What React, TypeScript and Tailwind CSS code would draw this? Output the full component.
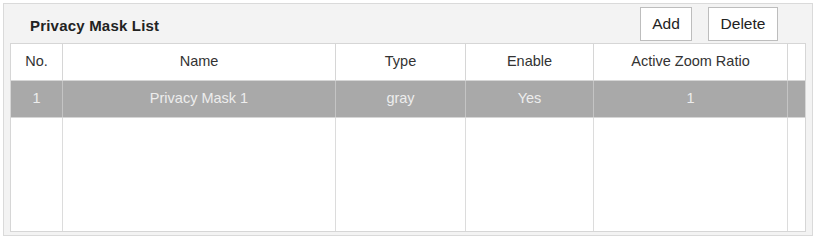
import React from 'react';

const cols = 'grid grid-cols-[52px_273px_130px_128px_194px_1fr]';

const headers = ['No.', 'Name', 'Type', 'Enable', 'Active Zoom Ratio', ''];
const row = ['1', 'Privacy Mask 1', 'gray', 'Yes', '1', ''];

export default function App() {
  return (
    <div className="w-[817px] h-[240px] bg-white pt-[3px] pl-[3px]" style={{ fontFamily: '"Liberation Sans", Arial, sans-serif' }}>
      <div className="w-[810px] h-[233px] border border-[#dadada] bg-[#f3f3f3] flex flex-col">
        {/* Title bar */}
        <div className="h-[39px] flex items-center justify-between pl-[26px] pr-[34px]">
          <span className="text-[15px] font-bold text-[#222] pt-[5px] tracking-[0.2px]">Privacy Mask List</span>
          <div className="flex items-center gap-[16px]">
            <button className="h-[34px] border border-[#bdbdbd] bg-white text-[15.5px] text-[#222] w-[52px]">Add</button>
            <button className="h-[34px] border border-[#bdbdbd] bg-white text-[15.5px] text-[#222] w-[70px]">Delete</button>
          </div>
        </div>

        {/* Table */}
        <div className="mx-[6px] mb-[3px] flex-1 border border-[#d6d6d6] bg-white flex flex-col">
          <div className={`${cols} h-[37px] border-b border-[#d6d6d6]`}>
            {headers.map((h, i) => (
              <div
                key={i}
                className={`flex items-center justify-center text-[14.5px] text-[#333] ${i < 5 ? 'border-r border-[#d6d6d6]' : ''}`}
              >
                {h}
              </div>
            ))}
          </div>
          <div className={`${cols} h-[37px] bg-[#a9a9a9] border-b border-[#d6d6d6]`}>
            {row.map((c, i) => (
              <div
                key={i}
                className={`flex items-center justify-center text-[14.5px] text-[#ededed] ${i < 5 ? 'border-r border-[#c4c4c4]' : ''}`}
              >
                {c}
              </div>
            ))}
          </div>
          <div className={`${cols} flex-1`}>
            {row.map((_, i) => (
              <div key={i} className={i < 5 ? 'border-r border-[#dcdcdc]' : ''} />
            ))}
          </div>
        </div>
      </div>
    </div>
  );
}
